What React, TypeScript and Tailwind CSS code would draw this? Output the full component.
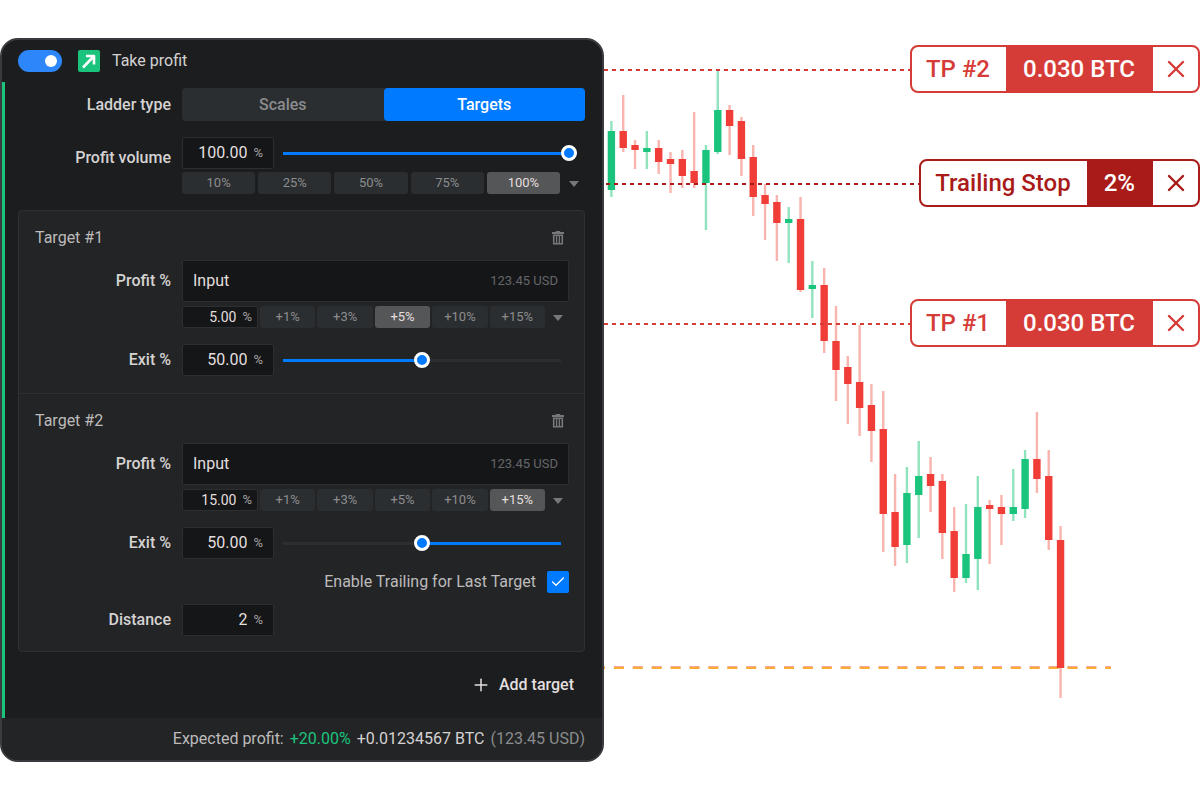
import React, { useState } from 'react';
import { Check, Plus, X } from 'lucide-react';
import clsx from 'clsx';

interface Candle {
  high: number;
  top: number;
  bottom: number;
  low: number;
  up?: boolean;
}

const candles: Candle[] = [
  { high: 121, top: 131, bottom: 190, low: 197, up: true },
  { high: 95, top: 131, bottom: 148, low: 152 },
  { high: 140, top: 145, bottom: 150, low: 169 },
  { high: 131, top: 148, bottom: 152, low: 169, up: true },
  { high: 140, top: 148, bottom: 162, low: 174 },
  { high: 152, top: 159, bottom: 164, low: 193 },
  { high: 150, top: 159, bottom: 176, low: 188 },
  { high: 112, top: 171, bottom: 183, low: 188 },
  { high: 145, top: 150, bottom: 183, low: 230, up: true },
  { high: 70, top: 110, bottom: 152, low: 154, up: true },
  { high: 105, top: 110, bottom: 126, low: 155 },
  { high: 117, top: 121, bottom: 159, low: 176 },
  { high: 145, top: 157, bottom: 197, low: 216 },
  { high: 184, top: 195, bottom: 204, low: 240 },
  { high: 195, top: 202, bottom: 223, low: 261 },
  { high: 207, top: 219, bottom: 223, low: 263, up: true },
  { high: 197, top: 219, bottom: 290, low: 292 },
  { high: 261, top: 285, bottom: 289, low: 318, up: true },
  { high: 268, top: 285, bottom: 341, low: 353 },
  { high: 306, top: 341, bottom: 370, low: 401 },
  { high: 356, top: 367, bottom: 384, low: 424 },
  { high: 325, top: 382, bottom: 408, low: 436 },
  { high: 384, top: 405, bottom: 431, low: 462 },
  { high: 391, top: 429, bottom: 514, low: 552 },
  { high: 474, top: 512, bottom: 547, low: 566 },
  { high: 467, top: 493, bottom: 545, low: 563, up: true },
  { high: 441, top: 476, bottom: 495, low: 538, up: true },
  { high: 457, top: 474, bottom: 486, low: 512 },
  { high: 474, top: 481, bottom: 533, low: 559 },
  { high: 507, top: 531, bottom: 578, low: 592 },
  { high: 504, top: 554, bottom: 578, low: 583, up: true },
  { high: 476, top: 507, bottom: 559, low: 590, up: true },
  { high: 500, top: 505, bottom: 509, low: 564 },
  { high: 495, top: 507, bottom: 514, low: 545 },
  { high: 469, top: 507, bottom: 514, low: 521, up: true },
  { high: 450, top: 459, bottom: 509, low: 518, up: true },
  { high: 412, top: 459, bottom: 479, low: 493 },
  { high: 450, top: 476, bottom: 540, low: 550 },
  { high: 526, top: 540, bottom: 668, low: 698 },
];

const CANDLE_STEP = 11.82;

const CandleChart: React.FC = () => (
  <svg viewBox="0 0 596 800" className="block w-full" role="img" aria-label="BTC price chart">
    <line x1="-9" x2="507" y1="667" y2="667" stroke="#f3a79a" strokeWidth="2" strokeDasharray="10 8.9" />
    <line x1="-9" x2="507" y1="668" y2="668" stroke="#fbad33" strokeWidth="2" strokeDasharray="10 8.9" />
    {candles.map((c, i) => {
      const x = 7.4 + i * CANDLE_STEP;
      return (
        <g key={i}>
          <rect x={x - 1.2} y={c.high} width="2.4" height={c.low - c.high} fill={c.up ? '#8fe3bd' : '#f9b4ae'} />
          <rect x={x - 3.7} y={c.top} width="7.4" height={c.bottom - c.top} fill={c.up ? '#1bc47d' : '#f03d37'} />
        </g>
      );
    })}
  </svg>
);

interface OrderTagProps {
  label: string;
  value: string;
  dark?: boolean;
  className: string;
}

const OrderTag: React.FC<OrderTagProps> = ({ label, value, dark, className }) => (
  <div className={clsx('absolute inset-x-0 flex items-center text-2xl font-medium', className)}>
    <div
      className={clsx(
        'mt-[2px] h-[2px] flex-1',
        dark
          ? 'ml-[2px] bg-[repeating-linear-gradient(90deg,#a81b18_0_4px,transparent_4px_8px)]'
          : 'bg-[repeating-linear-gradient(90deg,#d63c37_0_4px,transparent_4px_8px)]'
      )}
    />
    <div
      className={clsx(
        'flex h-12 items-stretch overflow-hidden rounded-lg border-2 bg-white',
        dark ? 'border-[#a81b18] text-[#a81b18]' : 'border-[#d63c37] text-[#d63c37]'
      )}
    >
      <span className="flex items-center pr-4 pl-[14px]">{label}</span>
      <span className={clsx('flex items-center pr-[18px] pl-[17px] text-white', dark ? 'bg-[#a81b18]' : 'bg-[#d63c37]')}>
        {value}
      </span>
      <button type="button" aria-label={`Cancel ${label}`} className="flex w-[45px] items-center justify-center">
        <X size={28} strokeWidth={2.1} />
      </button>
    </div>
  </div>
);

interface NumberFieldProps {
  id: string;
  value: string;
  label?: string;
  small?: boolean;
}

const NumberField: React.FC<NumberFieldProps> = ({ id, value, label, small }) => (
  <div
    className={clsx(
      'flex shrink-0 items-center gap-[6px] rounded-xs border border-[#2c2e31] bg-[#151618]',
      small ? 'h-[22px] w-[76px] pr-[5px]' : 'h-8 w-[92px] pr-[10px]'
    )}
  >
    <input
      id={id}
      aria-label={label}
      defaultValue={value}
      className={clsx(
        'w-0 min-w-0 flex-1 bg-transparent text-right text-[#e3dfdf] outline-none',
        small ? 'text-sm' : 'text-base'
      )}
    />
    <span className="text-[13px] text-[#a5a3a3]">%</span>
  </div>
);

interface SliderProps {
  label: string;
  value: number;
  inverted?: boolean;
}

const Slider: React.FC<SliderProps> = ({ label, value: initial, inverted }) => {
  const [value, setValue] = useState(initial);
  const from = inverted ? '#2c2e31' : '#007aff';
  const to = inverted ? '#007aff' : '#2c2e31';

  return (
    <input
      type="range"
      aria-label={label}
      value={value}
      onChange={(e) => setValue(Number(e.target.value))}
      style={{ backgroundImage: `linear-gradient(90deg, ${from} ${value}%, ${to} ${value}%)` }}
      className="h-4 min-w-0 flex-1 cursor-pointer appearance-none bg-[length:100%_3px] bg-center bg-no-repeat outline-none [&::-webkit-slider-thumb]:size-4 [&::-webkit-slider-thumb]:appearance-none [&::-webkit-slider-thumb]:rounded-full [&::-webkit-slider-thumb]:border-[3px] [&::-webkit-slider-thumb]:border-white [&::-webkit-slider-thumb]:bg-[#007aff]"
    />
  );
};

interface ChipsProps {
  options: string[];
  initial: string;
}

const Chips: React.FC<ChipsProps> = ({ options, initial }) => {
  const [active, setActive] = useState(initial);

  return (
    <>
      {options.map((option) => (
        <button
          key={option}
          type="button"
          onClick={() => setActive(option)}
          className={clsx(
            'h-[22px] min-w-0 flex-1 rounded-[3px] text-[13px]',
            option === active ? 'bg-[#555658] text-[#e3dfdf]' : 'bg-[#2b2e31] text-[#8b8c8d]'
          )}
        >
          {option}
        </button>
      ))}
      <button type="button" aria-label="More values" className="flex h-[22px] w-[22px] items-center justify-center text-[#77787a]">
        <svg width="10" height="6" viewBox="0 0 10 6" fill="currentColor" className="mt-[2px]">
          <path d="M0 0h10L5 6z" />
        </svg>
      </button>
    </>
  );
};

interface TargetProps {
  index: number;
  profit: string;
  preset: string;
  inverted?: boolean;
  children?: React.ReactNode;
}

const targetRow = 'grid grid-cols-[136px_minmax(0,1fr)] items-center gap-x-[11px]';
const rowLabel = 'text-right font-medium text-[#d5d2d2]';

const Target: React.FC<TargetProps> = ({ index, profit, preset, inverted, children }) => (
  <section className="pr-[15px] pl-4">
    <div className="flex h-[49px] items-center justify-between pt-[5px]">
      <h3 className="text-[#bdbbbb]">Target #{index}</h3>
      <button type="button" aria-label={`Delete target ${index}`} className="flex w-[22px] justify-center text-[#77787a]">
        <svg width="14" height="16" viewBox="0 0 14 16" fill="none" stroke="currentColor">
          <path d="M1 3h12M4.800 1.800h4.400" strokeWidth="1.8" />
          <path d="M2.700 5.300v8.500h8.600V5.300z" strokeWidth="1.6" />
          <path d="M5.600 5.500v8M8.400 5.500v8" strokeWidth="1.3" />
        </svg>
      </button>
    </div>
    <div className={targetRow}>
      <label htmlFor={`profit-${index}`} className={rowLabel}>Profit %</label>
      <div className="flex h-[42px] items-center rounded-xs border border-[#2c2e31] bg-[#151618] px-[10px]">
        <input
          id={`profit-${index}`}
          defaultValue="Input"
          className="min-w-0 flex-1 bg-transparent text-[#e3dfdf] outline-none"
        />
        <span className="text-[13px] text-[#656668]">123.45 USD</span>
      </div>
      <div className="col-start-2 mt-1 flex items-center gap-[2px]">
        <NumberField id={`percent-${index}`} label={`Target ${index} profit percent`} value={profit} small />
        <Chips options={['+1%', '+3%', '+5%', '+10%', '+15%']} initial={preset} />
      </div>
    </div>
    <div className={clsx(targetRow, 'mt-4')}>
      <label htmlFor={`exit-${index}`} className={rowLabel}>Exit %</label>
      <div className="flex items-center gap-[9px] pr-2">
        <NumberField id={`exit-${index}`} value="50.00" />
        <Slider label={`Target ${index} exit percent`} value={50} inverted={inverted} />
      </div>
    </div>
    {children}
  </section>
);

const mainRow = 'grid grid-cols-[153px_minmax(0,1fr)] items-center gap-x-[11px]';

const TakeProfitPanel: React.FC = () => {
  const [ladder, setLadder] = useState('Targets');

  return (
    <div className="overflow-hidden rounded-[18px] border-2 border-[#3a3b3e] bg-[#1c1d1f] text-base">
      <header className="flex h-[42px] items-center pl-4">
        <input
          id="take-profit"
          type="checkbox"
          role="switch"
          defaultChecked
          className="flex h-[22px] w-11 cursor-pointer appearance-none items-center rounded-full bg-[#55585c] px-[5px] before:size-3 before:rounded-full before:bg-white checked:justify-end checked:bg-[#2d87fb]"
        />
        <span className="ml-4 flex size-[22px] items-center justify-center rounded-xs bg-[#1bc47d]">
          <svg width="16" height="16" viewBox="0 0 16 16" fill="none" stroke="#fff" strokeWidth="2.6" strokeLinejoin="round">
            <path d="M2 14.500L12.500 3.500M5 3H13V11.500" />
          </svg>
        </span>
        <label htmlFor="take-profit" className="ml-3 text-[#d5d2d2]">Take profit</label>
      </header>

      <div className="border-l-[3px] border-[#1bc47d] pt-[6px] pr-[17px] pl-[13px]">
        <div className={mainRow}>
          <span className={rowLabel}>Ladder type</span>
          <div className="grid h-[33px] grid-cols-2 rounded-sm bg-[#2b2e31]">
            {['Scales', 'Targets'].map((name) => (
              <button
                key={name}
                type="button"
                onClick={() => setLadder(name)}
                className={clsx(
                  'rounded-sm font-medium',
                  ladder === name ? 'bg-[#007aff] text-white' : 'text-[#8b8c8d]'
                )}
              >
                {name}
              </button>
            ))}
          </div>
        </div>

        <div className={clsx(mainRow, 'mt-4')}>
          <label htmlFor="profit-volume" className={clsx(rowLabel, 'self-start pt-[9px]')}>Profit volume</label>
          <div>
            <div className="flex items-center gap-[9px] pr-2">
              <NumberField id="profit-volume" value="100.00" />
              <Slider label="Profit volume" value={100} />
            </div>
            <div className="mt-[3px] flex items-center gap-[3px]">
              <Chips options={['10%', '25%', '50%', '75%', '100%']} initial="100%" />
            </div>
          </div>
        </div>

        <div className="mt-4 rounded-sm border border-[#2e3033] bg-[#232426]">
          <Target index={1} profit="5.00" preset="+5%" />
          <div className="mt-[17px] border-t border-[#2e3033]" />
          <Target index={2} profit="15.00" preset="+15%" inverted>
            <div className="mt-[11px] flex items-center justify-end gap-[11px]">
              <label htmlFor="trailing" className="text-[#bdbbbb]">Enable Trailing for Last Target</label>
              <span className="grid size-[22px]">
                <input
                  id="trailing"
                  type="checkbox"
                  defaultChecked
                  className="peer col-start-1 row-start-1 appearance-none rounded-xs bg-[#3a3b3e] checked:bg-[#007aff]"
                />
                <Check
                  size={16}
                  strokeWidth={2}
                  className="pointer-events-none invisible col-start-1 row-start-1 place-self-center text-white peer-checked:visible"
                />
              </span>
            </div>
            <div className={clsx(targetRow, 'mt-[10px] mb-[15px]')}>
              <label htmlFor="distance" className={rowLabel}>Distance</label>
              <NumberField id="distance" value="2" />
            </div>
          </Target>
        </div>

        <div className="flex h-[66px] items-center justify-end pr-[11px]">
          <button type="button" className="flex items-center gap-2 font-medium text-[#e3dfdf]">
            <Plus size={20} strokeWidth={1.8} />
            Add target
          </button>
        </div>
      </div>

      <footer className="flex h-[42px] items-center justify-end gap-[6px] bg-[#232426] pr-[17px] text-[#bdbbbb]">
        <span>Expected profit:</span>
        <span className="text-[#1bc47d]">+20.00%</span>
        <span className="text-[#d5d2d2]">+0.01234567 BTC</span>
        <span className="text-[#8b8c8d]">(123.45 USD)</span>
      </footer>
    </div>
  );
};

const App: React.FC = () => (
  <main className="grid grid-cols-[604fr_596fr] items-start bg-white font-[Roboto,sans-serif]">
    <div className="py-[38px]">
      <TakeProfitPanel />
    </div>
    <div className="relative">
      <CandleChart />
      <OrderTag label="TP #2" value="0.030 BTC" className="top-[45px]" />
      <OrderTag label="Trailing Stop" value="2%" dark className="top-[159px]" />
      <OrderTag label="TP #1" value="0.030 BTC" className="top-[299px]" />
    </div>
  </main>
);

export default App;
